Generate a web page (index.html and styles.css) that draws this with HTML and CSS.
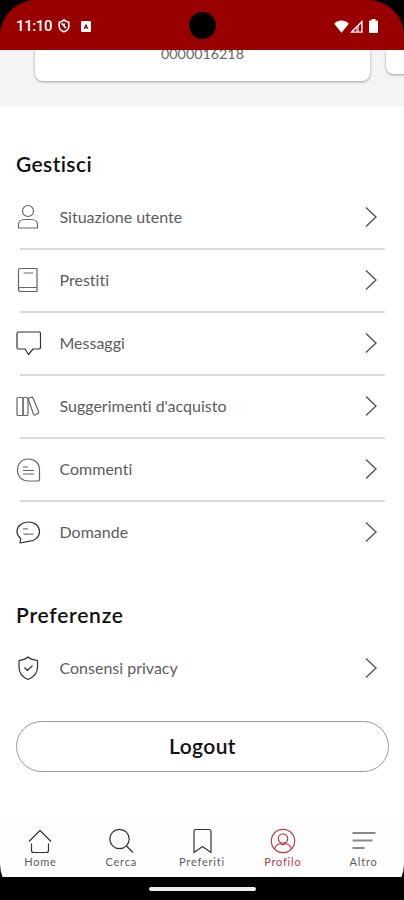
FILE: index.html
```html
<!DOCTYPE html>
<html lang="it">
<head>
<meta charset="utf-8">
<title>Profilo</title>
<link rel="stylesheet" href="styles.css">
</head>
<body>
<div class="screen">
  <header class="status">
    <span class="time">11:10</span>
    <svg class="s-alarm" width="12" height="14" viewBox="0 0 12 14" fill="none" stroke="#fff" stroke-width="1.6"><path d="M1.2 3.2 4 2.2 6 1l2 1.2 2.8 1v4C10.800 10 8.500 12 6 12.800 3.500 12 1.200 10 1.200 7.200Z"/><path d="M3.500 4.200 8 9.300M6.200 4.500v2.500"/></svg>
    <svg class="s-app" width="10" height="11" viewBox="0 0 10 11"><rect width="10" height="11" rx="1.200" fill="#fff"/><path d="M5 2.500 7.400 8H6L5.600 7H4.400L4 8H2.600Z" fill="#900"/></svg>
    <span class="camera"></span>
    <svg class="s-wifi" width="15" height="13" viewBox="0 0 15 13" fill="#fff"><path d="M7.500 12.700.2 3.700C4.300-.5 10.700-.5 14.800 3.700Z"/></svg>
    <svg class="s-signal" width="13" height="13" viewBox="0 0 13 13"><path d="M1.600 12.100 11.900 1.800V12.100Z" fill="none" stroke="#fff" stroke-width="1.400"/><path d="M6 12V8L9 5v7Z" fill="#fff" opacity=".55"/></svg>
    <svg class="s-battery" width="9" height="14" viewBox="0 0 9 14" fill="#fff"><path d="M2.500 0h4v1.500H8Q9 1.500 9 2.500V13Q9 14 8 14H1Q0 14 0 13V2.500Q0 1.500 1 1.500H2.500Z"/></svg>
  </header>
  <section class="cards">
    <div class="card"><span>0000016218</span></div>
    <div class="card next"></div>
  </section>
  <main>
    <h2>Gestisci</h2>
    <ul class="list">
      <li><svg class="ic" viewBox="-.5 0 28 28"><circle cx="11.500" cy="8" r="5.500"/><path d="M2 25v-3.500C2 18.500 4.500 16.500 8 16.500h7c3.500 0 6 2 6 5V25Z"/></svg><span>Situazione utente</span><svg class="chev" viewBox="0 0 12 22"><path d="m1 1.500 10 9.500-10 9.500"/></svg></li>
      <li><svg class="ic" viewBox="0 0 28 28"><path d="M4.500 2.500H21V25.500H4.500Q2.500 25.500 2.500 23.500V4.500Q2.500 2.500 4.500 2.500M2.500 23.500Q2.500 21.500 4.500 21.500H21M7.500 7H17"/></svg><span>Prestiti</span><svg class="chev" viewBox="0 0 12 22"><path d="m1 1.500 10 9.500-10 9.500"/></svg></li>
      <li><svg class="ic dark" viewBox="0 0 28 28"><path d="M2.500 3H23Q24.500 3 24.500 4.500V18.500Q24.500 20 23 20H17L12.500 25.500 9 20H2.500Q1 20 1 18.500V4.500Q1 3 2.500 3Z"/></svg><span>Messaggi</span><svg class="chev" viewBox="0 0 12 22"><path d="m1 1.500 10 9.500-10 9.500"/></svg></li>
      <li><svg class="ic" viewBox="0 0 28 28"><rect x="1" y="5.500" width="6" height="18" rx="1"/><rect x="7" y="5.500" width="5" height="18" rx="1"/><path d="M12 6.500 15.500 5.300Q16.500 5 17 6L22.700 19.800Q23 21 22 21.400L19 23Q18 23.300 17.500 22.200Z"/></svg><span>Suggerimenti d'acquisto</span><svg class="chev" viewBox="0 0 12 22"><path d="m1 1.500 10 9.500-10 9.500"/></svg></li>
      <li><svg class="ic" viewBox="0 -.5 28 28"><path d="M12.500 3.500C19 3.500 23.500 8 23.500 14V23.500Q23.500 25.500 21.500 25.500H12.500C6 25.500 1.500 21 1.500 14.500S6 3.500 12.500 3.500ZM7 11.500H12M7 15H18M7 18.500H18"/></svg><span>Commenti</span><svg class="chev" viewBox="0 0 12 22"><path d="m1 1.500 10 9.500-10 9.500"/></svg></li>
      <li><svg class="ic dark" viewBox="0 0 28 28"><path d="M4.700 20.500C2.500 18.500 1 16.500 1 13.500 1 8 6 4 12.500 4S23.500 8 23.500 13.500 19 23 12.500 23.300L4 25Z"/><path class="lines" d="M7 10.800H12M7.500 16.200H17.500"/></svg><span>Domande</span><svg class="chev" viewBox="0 0 12 22"><path d="m1 1.500 10 9.500-10 9.500"/></svg></li>
    </ul>
    <h2 class="second">Preferenze</h2>
    <ul class="list">
      <li><svg class="ic dark" viewBox="-.5 0 28 28"><path d="M11.500 3C9 5.500 5.500 6 2.500 6.500V13C2.500 19 5.500 23 11.500 25.500 17.500 23 21 19 21 13V6.500C17.500 6 14 5.500 11.500 3ZM8 13.500 10.800 16.500 16 11.500"/></svg><span>Consensi privacy</span><svg class="chev" viewBox="0 0 12 22"><path d="m1 1.500 10 9.500-10 9.500"/></svg></li>
    </ul>
    <button class="logout">Logout</button>
  </main>
  <nav class="tabs">
    <a><svg viewBox="0 0 28 28" stroke-width="1.500"><path d="M3 14.500 14 3.500 25 14.500M5.500 16.500V23.500Q5.500 25.500 7.500 25.500H20.500Q22.500 25.500 22.500 23.500V16.500"/></svg><span>Home</span></a>
    <a><svg viewBox="0 0 28 28"><circle cx="12.500" cy="12" r="9.700"/><path d="m19.500 19 6.500 6.500"/></svg><span>Cerca</span></a>
    <a><svg viewBox="0 0 28 28"><path d="M7.500 2.500H21Q23 2.500 23 4.500V25.500L14.500 19.500 6 25.500V4.500Q6 2.500 7.500 2.500Z"/></svg><span>Preferiti</span></a>
    <a class="active"><svg viewBox="0 0 28 28"><circle cx="14" cy="14" r="11.700"/><circle cx="14" cy="11.500" r="4.700"/><path d="M5.500 22C6.500 18.500 9 17 11.500 16.500Q14 19 16.500 16.500C19 17 21.500 18.500 22.500 22"/></svg><span>Profilo</span></a>
    <a class="more"><svg viewBox="0 0 28 28"><path d="M2.500 6H25.500M2.500 13.500H22.500M2.500 21H14.500"/></svg><span>Altro</span></a>
  </nav>
  <footer class="gesture"><span></span></footer>
</div>
</body>
</html>
```
FILE: styles.css
```css
* { box-sizing: border-box; }
body { margin: 0; background: #000; font-family: Lato, "Liberation Sans", sans-serif; font-variant-ligatures: none; }
.screen { width: 404px; height: 900px; background: #000; border-radius: 36px; overflow: hidden; display: flex; flex-direction: column; }

.status { position: relative; flex: none; height: 50px; background: #990000; display: flex; align-items: center; padding: 2px 26px 0 16px; }
.time { width: 35px; font: 500 15px/20px Roboto, sans-serif; letter-spacing: -0.4px; color: #fff; }
.s-alarm { margin-left: 7px; }
.s-app { margin-left: 11px; }
.camera { position: absolute; left: 189px; top: 12px; width: 27px; height: 27px; border-radius: 50%; background: #000; }
.s-wifi { margin-left: auto; }
.s-signal { margin-left: 1px; }
.s-battery { margin-left: 6px; }

.cards { flex: none; height: 56px; background: #f4f4f4; display: flex; align-items: flex-start; gap: 16px; padding-left: 35px; overflow: hidden; }
.card { flex: none; width: 335px; height: 31px; background: #fff; border-radius: 0 0 8px 8px; box-shadow: 0 1px 3px rgba(0, 0, 0, .35); text-align: center; font-size: 14.3px; line-height: 18px; color: #666; overflow: hidden; }
.card span { display: block; margin-top: -5px; }
.card.next { height: 24px; }

main { flex: 1; background: #fff; padding: 0 15px 0 16px; }
h2 { margin: 44px 0 0; font-size: 21px; font-weight: 600; line-height: 28px; letter-spacing: .4px; color: #111; }
.list { list-style: none; margin: 7px 0 0; padding: 0; }
.list li { position: relative; height: 63px; display: flex; align-items: center; }
.list li + li::before { content: ""; position: absolute; left: 4px; right: 4px; top: 0; height: 2px; background: #d9d9d9; }
.ic { width: 28px; height: 28px; margin-right: 15.500px; fill: none; stroke: #666; stroke-width: 1.2; stroke-linejoin: round; }
.ic.dark { stroke: #333; }
.ic .lines { stroke: #777; }
.list span { flex: 1; font-size: 16px; line-height: 20px; color: #5c5c5c; }
.chev { width: 12px; height: 22px; margin-right: 12px; fill: none; stroke: #555; stroke-width: 1.4; }
h2.second { margin-top: 38px; letter-spacing: .75px; }
.logout { display: block; width: 373px; height: 51px; margin: 22px 0 0; padding: 0 0 1px; border: 1px solid #999; border-radius: 26px; background: #fff; font: 600 21px/28px Lato, sans-serif; letter-spacing: .4px; color: #111; }

.tabs { flex: none; height: 59px; background: #fdfdfd; display: flex; }
.tabs a { flex: 1; display: flex; flex-direction: column; align-items: center; padding-top: 9px; font-size: 11px; line-height: 14px; letter-spacing: .8px; color: #5c5c5c; }
.tabs svg { width: 28px; height: 28px; fill: none; stroke: #333; stroke-width: 1.2; stroke-linejoin: round; }
.tabs .active { color: #b5404c; }
.tabs .active svg { stroke: #b5404c; }
.tabs .more svg { stroke: #888; stroke-width: 1.8; }
.gesture { flex: none; height: 23px; background: #000; display: flex; justify-content: center; align-items: center; }
.gesture span { width: 107px; height: 4px; border-radius: 2px; background: #eee; }
```
